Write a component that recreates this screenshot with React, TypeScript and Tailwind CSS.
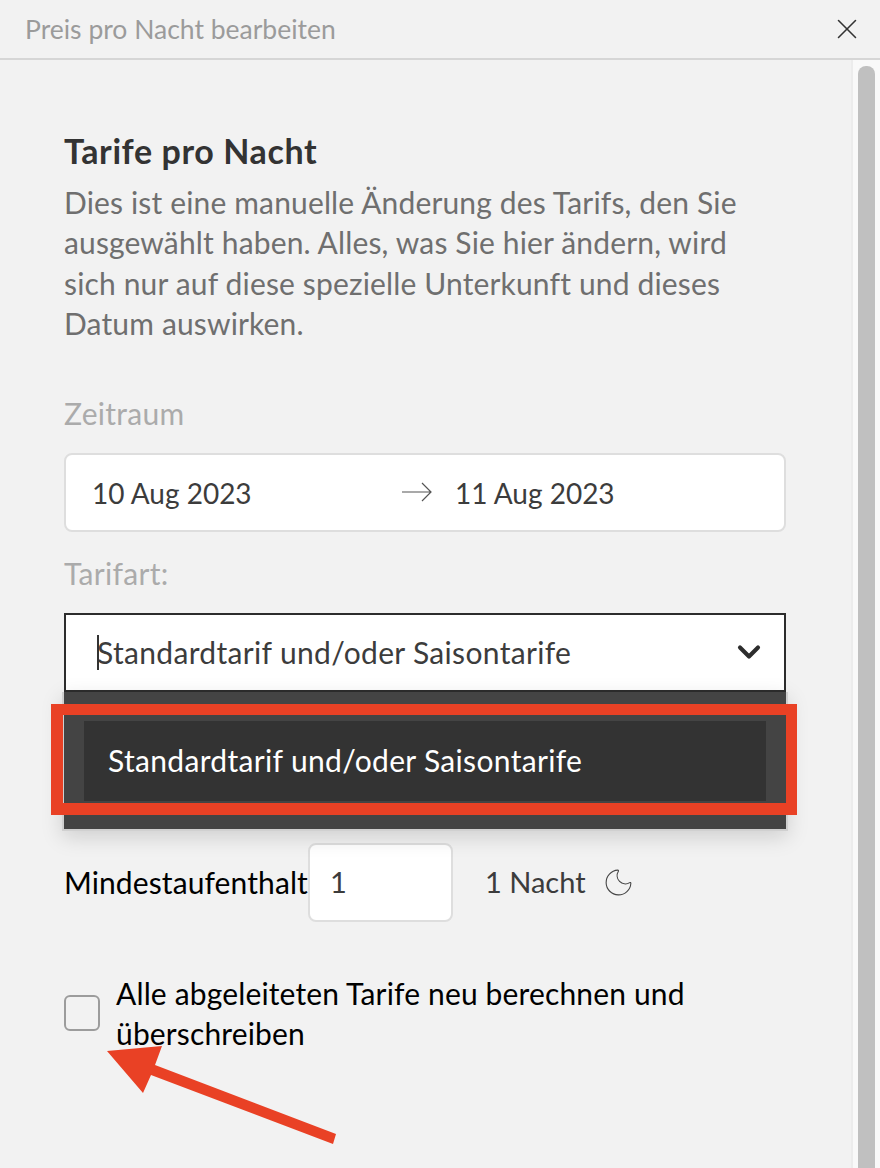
import { ChevronDown, Moon, X } from "lucide-react"

const font = "font-['Lato',sans-serif]"

export default function App() {
  return (
    <div className={`relative h-[1168px] w-[880px] overflow-hidden bg-[#f2f2f2] ${font}`}>
      {/* Modal header */}
      <div className="flex h-[60px] items-center justify-between border-b-2 border-[#d6d6d6] pl-[25px] pr-[16px]">
        <span className="pt-[1px] text-[26.5px] text-[#9b9b9b]">Preis pro Nacht bearbeiten</span>
        <X className="h-[34px] w-[34px] text-[#333333]" strokeWidth={1.1} />
      </div>

      <div className="flex h-[1108px]">
        <div className="w-[851px] px-[64px] pt-[71px]">
          <h2 className="text-[34px] font-bold leading-[40px] tracking-[0.6px] text-[#333333]">Tarife pro Nacht</h2>
          <p className="mt-[11px] w-[722px] text-[30px] leading-[40.4px] tracking-[0.15px] text-[#6f6f6f]">
            Dies ist eine manuelle Änderung des Tarifs, den Sie ausgewählt haben. Alles, was Sie hier ändern, wird sich nur auf diese spezielle Unterkunft und dieses Datum auswirken.
          </p>

          <div className="mt-[49px] text-[30px] leading-[40px] tracking-[0.3px] text-[#ababab]">Zeitraum</div>
          <div className="mt-[20px] flex h-[79px] w-[722px] items-center rounded-[8px] border-2 border-[#dedede] bg-white pl-[26px] text-[28px] text-[#3c3c3c]">
            <span className="w-[310px] pt-[1px]">10 Aug 2023</span>
            <svg width="30" height="20" viewBox="0 0 30 20" fill="none" stroke="#555555" strokeWidth="1.2">
              <path d="M0 10H29M20 1l9 9-9 9" />
            </svg>
            <span className="ml-[23px] pt-[1px]">11 Aug 2023</span>
          </div>

          <div className="mt-[21px] text-[30px] leading-[40px] tracking-[0.3px] text-[#ababab]">Tarifart:</div>
          <div className="relative mt-[20px] h-[79px] w-[722px]">
            <div className="relative flex h-full items-center justify-between border-2 border-[#2d2d2d] bg-white pl-[31px] pr-[17px] text-[30px] tracking-[0.33px] text-[#3c3c3c]">
              <span>Standardtarif und/oder Saisontarife</span>
              <span className="absolute left-[31px] top-[20px] h-[35px] w-[2px] bg-[#333333]" />
              <ChevronDown className="h-[36px] w-[36px] text-[#2d2d2d]" strokeWidth={2.75} />
            </div>
            {/* Open dropdown */}
            <div className="absolute -left-[2px] -right-[2px] top-[79px] z-10 h-[139px] border-x-2 border-b-2 border-[#d0d0d0] bg-[#444444] px-[20px] pt-[29px] shadow-[0_6px_20px_rgba(0,0,0,0.15)]">
              <div className="flex h-[80px] items-center bg-[#333333] pl-[24px] text-[30px] tracking-[0.33px] text-white">
                Standardtarif und/oder Saisontarife
              </div>
            </div>
          </div>

          <div className="mt-[151px] flex items-center text-[29px]">
            <span className="w-[244px] text-[30px] tracking-[0.1px] text-black">Mindestaufenthalt</span>
            <div className="flex h-[79px] w-[145px] items-center rounded-[8px] border-2 border-[#dedede] bg-white pl-[20px] text-[#3c3c3c]">1</div>
            <span className="ml-[32px] text-[#3c3c3c]">1 Nacht</span>
            <Moon className="ml-[16px] h-[33px] w-[33px] text-[#444444]" strokeWidth={0.8} />
          </div>

          <div className="mt-[51px] flex items-center gap-[16px]">
            <div className="h-[36px] w-[36px] shrink-0 rounded-[6px] border-2 border-[#9c9c9c]" />
            <span className="text-[30px] leading-[40px] tracking-[0.15px] text-black">
              Alle abgeleiteten Tarife neu berechnen und überschreiben
            </span>
          </div>
        </div>

        {/* Scrollbar */}
        <div className="w-[29px] border-l-2 border-[#ececec] bg-[#f9f9f9] pl-[5px] pt-[6px]">
          <div className="h-full w-[17px] rounded-t-[8px] bg-[#c0c0c0]" />
        </div>
      </div>

      {/* Red annotation: box round the option */}
      <div className="absolute left-[51px] top-[704px] z-20 h-[111px] w-[746px] border-b-[12px] border-l-[12px] border-r-[11px] border-t-[11px] border-[#e94125]" />

      {/* Red annotation: arrow to the checkbox */}
      <svg className="absolute left-0 top-0 z-20" width="880" height="1168" viewBox="0 0 880 1168">
        <polygon
          fill="#e94125"
          points="107,1051 162,1046 155,1065 336,1134 333,1144 151,1075 143,1093"
        />
      </svg>
    </div>
  )
}
